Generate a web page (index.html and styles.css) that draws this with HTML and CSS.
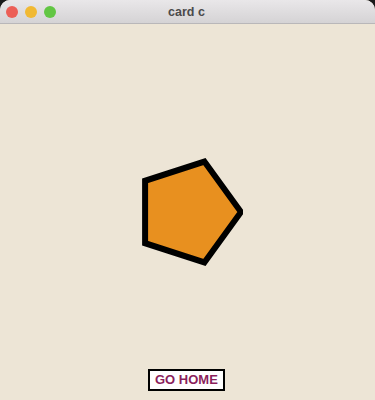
FILE: index.html
```html
<!DOCTYPE html>
<html lang="en">
<head>
    <meta charset="UTF-8">
    <meta name="viewport" content="width=device-width, initial-scale=1.0">
    <title>card c</title>
    <link rel="stylesheet" href="styles.css">
</head>
<body>
    <div class="window">
        <div class="titlebar">
            <div class="lights">
                <span class="light red"></span>
                <span class="light yellow"></span>
                <span class="light green"></span>
            </div>
            <div class="title">card c</div>
        </div>
        <div class="stage">
            <svg class="shape" width="110" height="110" viewBox="0 0 110 110">
                <polygon points="108,55 71.4,105.4 12.1,86.2 12.1,23.8 71.4,4.6" fill="#e8901f" stroke="#000" stroke-width="6" stroke-linejoin="miter"/>
            </svg>
            <button class="home-button">GO HOME</button>
        </div>
    </div>
</body>
</html>
```

FILE: styles.css
```css
html, body {
    margin: 0;
    padding: 0;
    background: #1a1a1a;
    height: 100%;
}

body {
    font-family: 'Liberation Sans', Arial, sans-serif;
}

.window {
    height: 400px;
    display: flex;
    flex-direction: column;
    border-radius: 10px 10px 0 0;
    overflow: hidden;
    background: #ede5d6;
}

.titlebar {
    position: relative;
    height: 23px;
    flex-shrink: 0;
    background: linear-gradient(#e9e7e9, #d5d3d5);
    border-bottom: 1px solid #b9b7b9;
    display: flex;
    align-items: center;
    justify-content: center;
}

.lights {
    position: absolute;
    left: 6px;
    top: 6px;
    display: flex;
    gap: 7px;
}

.light {
    width: 12px;
    height: 12px;
    border-radius: 50%;
}

.red { background: #ec5f57; }
.yellow { background: #f1b933; }
.green { background: #62c644; }

.title {
    font-size: 12.5px;
    font-weight: bold;
    color: #4b4a4b;
    padding-right: 2px;
}

.stage {
    position: relative;
    flex: 1;
    display: flex;
    align-items: center;
    justify-content: center;
}

.shape {
    display: block;
}

.home-button {
    position: absolute;
    left: 148px;
    bottom: 9px;
    padding: 2px 5px;
    line-height: 14px;
    background: #fff;
    border: 2px solid #000;
    border-radius: 0;
    font-family: 'Liberation Sans', Arial, sans-serif;
    font-size: 13px;
    font-weight: bold;
    color: #8b1f5c;
}
```
